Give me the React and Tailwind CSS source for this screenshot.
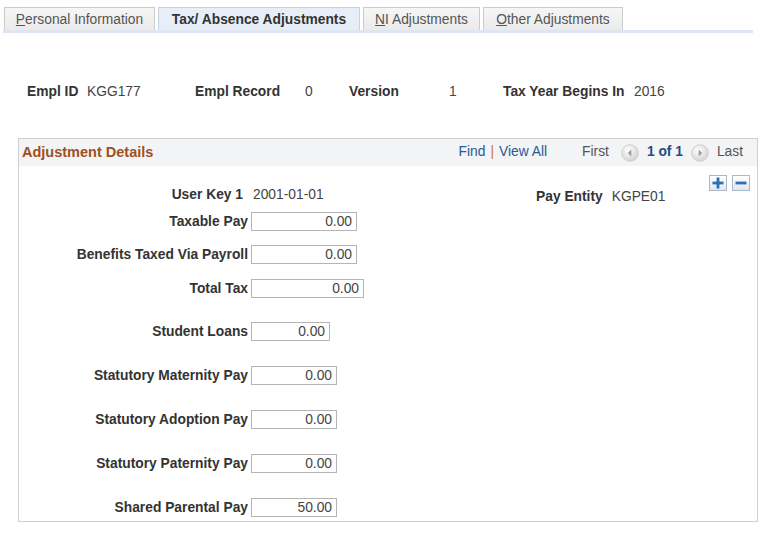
import React from 'react'

const tabs = [
    { key: 'P', rest: 'ersonal Information', w: 'w-[151px]' },
    { label: 'Tax/ Absence Adjustments', active: true, w: 'w-[202px]' },
    { key: 'N', rest: 'I Adjustments', w: 'w-[117px]' },
    { key: 'O', rest: 'ther Adjustments', w: 'w-[140px]' },
]

const rows = [
    { label: 'Taxable Pay', value: '0.00', w: 'w-[106px]', mt: 'mt-[7px]' },
    { label: 'Benefits Taxed Via Payroll', value: '0.00', w: 'w-[106px]', mt: 'mt-[14px]' },
    { label: 'Total Tax', value: '0.00', w: 'w-[113px]', mt: 'mt-[15px]' },
    { label: 'Student Loans', value: '0.00', w: 'w-[79px]', mt: 'mt-[24px]' },
    { label: 'Statutory Maternity Pay', value: '0.00', w: 'w-[86px]', mt: 'mt-[25px]' },
    { label: 'Statutory Adoption Pay', value: '0.00', w: 'w-[86px]', mt: 'mt-[25px]' },
    { label: 'Statutory Paternity Pay', value: '0.00', w: 'w-[86px]', mt: 'mt-[25px]' },
    { label: 'Shared Parental Pay', value: '50.00', w: 'w-[86px]', mt: 'mt-[25px]' },
]

function NavCircle({ dir }) {
    return (
        <svg width="18" height="18" viewBox="0 0 18 18">
            <defs>
                <radialGradient id={'g' + dir} cx="40%" cy="35%" r="70%">
                    <stop offset="0%" stopColor="#ffffff" />
                    <stop offset="100%" stopColor="#d0d0d0" />
                </radialGradient>
            </defs>
            <circle cx="9" cy="9" r="8.3" fill={'url(#g' + dir + ')'} stroke="#c8c8c8" strokeWidth="0.8" />
            {dir === 'prev' ? (
                <polygon points="10.3,5.6 6.9,9 10.3,12.4" fill="#9a9a9a" />
            ) : (
                <polygon points="7.7,5.6 11.1,9 7.7,12.4" fill="#9a9a9a" />
            )}
        </svg>
    )
}

function SmallBtn({ children }) {
    return (
        <div className="w-[18px] h-[16px] border border-[#a9b8ca] bg-gradient-to-b from-white to-[#e3e8ee] flex items-center justify-center">
            {children}
        </div>
    )
}

export default function App() {
    return (
        <div className="w-[778px] h-[534px] bg-white text-[13.8px] text-[#333] font-['Liberation_Sans',Arial,sans-serif] overflow-hidden">
            {/* tabs */}
            <div className="pt-[7px] pl-[3px]">
                <div className="flex gap-[3px] pl-[1px]">
                    {tabs.map((t, i) => (
                        <div
                            key={i}
                            className={
                                t.w +
                                ' h-[23px] pt-[2px] flex items-center justify-center border border-b-0 ' +
                                (t.active
                                    ? 'bg-[#e7eef7] border-[#c5d2e2] font-bold text-[#333]'
                                    : 'bg-gradient-to-b from-[#f6f6f6] to-[#ebebeb] border-[#cbcbcb] text-[#555]')
                            }
                        >
                            {t.active ? t.label : (
                                <span><span className="underline">{t.key}</span>{t.rest}</span>
                            )}
                        </div>
                    ))}
                </div>
                <div className="w-[750px] h-[3px] bg-[#dde6f1]" />
            </div>

            {/* key fields */}
            <div className="flex items-center mt-[49px] pl-[27px] h-[20px]">
                <span className="w-[60px] font-bold">Empl ID</span>
                <span className="w-[108px] text-[#444]">KGG177</span>
                <span className="w-[110px] font-bold">Empl Record</span>
                <span className="w-[44px] text-[#444]">0</span>
                <span className="w-[100px] font-bold">Version</span>
                <span className="w-[54px] text-[#444]">1</span>
                <span className="w-[131px] font-bold">Tax Year Begins In</span>
                <span className="text-[#444]">2016</span>
            </div>

            {/* adjustment details box */}
            <div className="ml-[18px] mt-[36px] w-[740px] h-[384px] border border-[#cdd1d6]">
                <div className="h-[27px] bg-[#f2f4f5] flex items-center pl-[3px] pr-[14px]">
                    <span className="font-bold text-[#a0501c] text-[14.5px]">Adjustment Details</span>
                    <div className="ml-auto flex items-center">
                        <span className="text-[#2a5a93]">Find</span>
                        <span className="text-[#c8741f] mx-[5px]">|</span>
                        <span className="text-[#2a5a93]">View All</span>
                        <span className="ml-[35px] text-[#555]">First</span>
                        <span className="ml-[12px] flex"><NavCircle dir="prev" /></span>
                        <span className="ml-[8px] font-bold text-[#1f4d87]">1 of 1</span>
                        <span className="ml-[8px] flex"><NavCircle dir="next" /></span>
                        <span className="ml-[8px] text-[#555]">Last</span>
                    </div>
                </div>

                <div className="relative">
                    <div className="absolute right-[7px] top-[9px] flex gap-[5px]">
                        <SmallBtn>
                            <svg width="12" height="12" viewBox="0 0 12 12">
                                <rect x="4.6" y="0.5" width="2.8" height="11" fill="#2d6fb8" />
                                <rect x="0.5" y="4.6" width="11" height="2.8" fill="#2d6fb8" />
                            </svg>
                        </SmallBtn>
                        <SmallBtn>
                            <svg width="12" height="12" viewBox="0 0 12 12">
                                <rect x="0.5" y="4.6" width="11" height="2.8" fill="#2d6fb8" />
                            </svg>
                        </SmallBtn>
                    </div>

                    <div className="pt-[20px] pb-[5px]">
                        <div className="flex items-center h-[19px]">
                            <div className="w-[517px] flex items-center">
                                <span className="w-[224px] text-right font-bold">User Key 1</span>
                                <span className="ml-[10px] text-[#444]">2001-01-01</span>
                            </div>
                            <span className="font-bold mt-[3px]">Pay Entity</span>
                            <span className="ml-[9px] text-[#444] mt-[3px]">KGPE01</span>
                        </div>

                        {rows.map((r) => (
                            <div key={r.label} className={'flex items-center h-[19px] ' + r.mt}>
                                <span className="w-[229px] text-right font-bold pt-[1px]">{r.label}</span>
                                <div
                                    className={
                                        r.w +
                                        ' ml-[3px] h-[19px] pt-[1px] border border-[#b5b5b5] bg-white flex items-center justify-end pr-[4px] text-[#444]'
                                    }
                                >
                                    {r.value}
                                </div>
                            </div>
                        ))}
                    </div>
                </div>
            </div>
        </div>
    )
}
